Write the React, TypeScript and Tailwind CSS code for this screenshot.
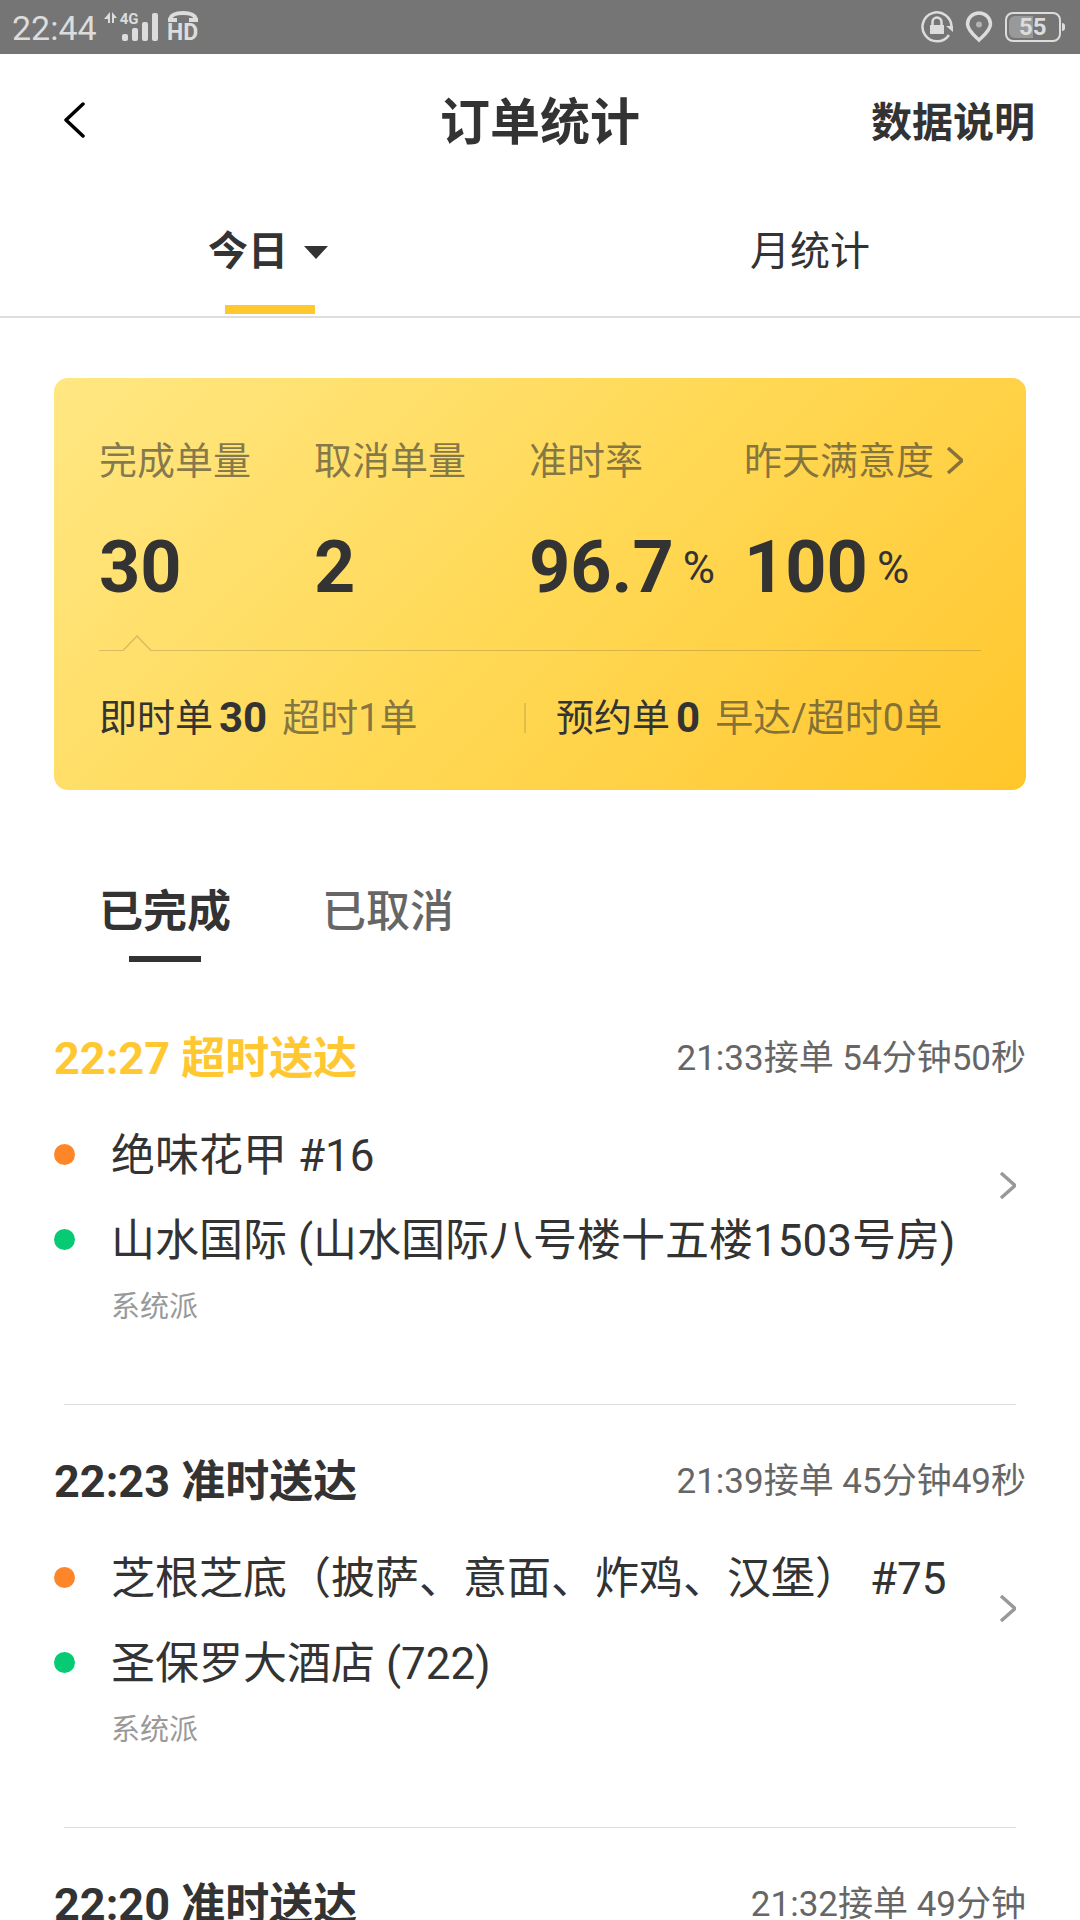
import { useState } from 'react';
import clsx from 'clsx';

type Order = {
  time: string;
  status: string;
  late?: boolean;
  summary: string;
  shop?: string;
  address?: string;
  source?: string;
};

const stats = [
  { label: '完成单量', value: '30' },
  { label: '取消单量', value: '2' },
  { label: '准时率', value: '96.7', unit: '%' },
  { label: '昨天满意度', value: '100', unit: '%', link: true },
];

const orders: Order[] = [
  {
    time: '22:27',
    status: '超时送达',
    late: true,
    summary: '21:33接单 54分钟50秒',
    shop: '绝味花甲 #16',
    address: '山水国际 (山水国际八号楼十五楼1503号房)',
    source: '系统派',
  },
  {
    time: '22:23',
    status: '准时送达',
    summary: '21:39接单 45分钟49秒',
    shop: '芝根芝底（披萨、意面、炸鸡、汉堡） #75',
    address: '圣保罗大酒店 (722)',
    source: '系统派',
  },
  { time: '22:20', status: '准时送达', summary: '21:32接单 49分钟' },
];

function Chevron({ className }: { className?: string }) {
  return (
    <svg viewBox="0 0 18 28" className={clsx('h-7 w-[18px] shrink-0', className)} fill="none" stroke="currentColor" strokeWidth="3.5" aria-hidden="true">
      <path d="M3 1 17 13.500 3 26" />
    </svg>
  );
}

function StatusBar() {
  return (
    <div className="flex h-[54px] shrink-0 items-center justify-between bg-[#757575] pr-[15px] pl-3 text-[#dcdcdc]">
      <div className="flex items-center">
        <span className="pt-0.5 text-[34px] leading-[54px]">22:44</span>
        <div className="relative ml-[7px] h-8 w-[55px]">
          <svg viewBox="0 0 55 32" className="h-8 w-[55px]" fill="currentColor" aria-hidden="true">
            <path d="M6 1v11H4V8H0zM8 1l5 6H10v5H8z" />
            <rect x="18" y="23" width="6" height="7" rx="2" />
            <rect x="28" y="17" width="6" height="13" rx="2" />
            <rect x="38" y="11" width="6" height="19" rx="2" />
            <rect x="48" y="2" width="6" height="28" rx="2" />
          </svg>
          <span className="absolute top-0 left-4 text-[15px] leading-4 font-bold">4G</span>
        </div>
        <div className="ml-2 flex w-8 flex-col items-center">
          <svg viewBox="0 0 30 12" className="h-3 w-[30px]" fill="none" stroke="currentColor" strokeWidth="4" aria-hidden="true">
            <path d="M2 8C3 4 8 2 15 2s12 2 13 6" />
            <path d="M0 9h9M21 9h9" />
          </svg>
          <span className="text-[23px] leading-5 font-bold">HD</span>
        </div>
      </div>
      <div className="flex items-center">
        <svg viewBox="0 0 32 32" className="h-8 w-8" fill="none" stroke="currentColor" strokeWidth="2.5" aria-hidden="true">
          <path d="M28 24A14.500 14.500 0 1 1 30.500 16" />
          <path d="M25 15h7v6z" fill="currentColor" stroke="none" />
          <rect x="9" y="14" width="14" height="9" fill="currentColor" stroke="none" />
          <path d="M11.500 14v-3a4.500 4.500 0 0 1 9 0v3" />
        </svg>
        <svg viewBox="0 0 28 32" className="ml-3 h-8 w-7" fill="none" stroke="currentColor" strokeWidth="3.500" aria-hidden="true">
          <path d="M14 29C10 25 2.500 19.500 2.500 13a11.500 11 0 0 1 23 0C25.500 19.500 18 25 14 29z" />
          <circle cx="14" cy="13.500" r="3" fill="currentColor" stroke="none" opacity=".6" />
        </svg>
        <div className="ml-3 flex h-[30px] w-14 items-center rounded-lg border-2 border-current p-0.5">
          <div className="flex h-full w-1/2 items-center rounded-l-md bg-[#999]">
            <span className="pl-2.5 text-2xl leading-6 font-bold">55</span>
          </div>
        </div>
        <div className="ml-px h-2 w-[3px] rounded-r-sm bg-current" />
      </div>
    </div>
  );
}

function SummaryCard() {
  return (
    <section className="mx-[54px] mt-[60px] rounded-[14px] bg-linear-135 from-[#ffe782] via-[#ffd955] to-[#ffc629] px-[45px] pt-[53px] pb-[42px]">
      <div className="mr-[22px] grid grid-cols-4">
        {stats.map((stat) => (
          <div key={stat.label} className="whitespace-nowrap">
            <div className="flex h-[60px] items-center text-[38px] text-[#333]/60">
              {stat.link ? (
                <a href="#satisfaction" className="flex items-center gap-[11px]">
                  {stat.label}
                  <Chevron />
                </a>
              ) : (
                stat.label
              )}
            </div>
            <div className="mt-[37px] flex h-20 items-center gap-[9px]">
              <span className="text-[72px] leading-20 font-bold">{stat.value}</span>
              {stat.unit && <span className="text-[44px] leading-20">{stat.unit}</span>}
            </div>
          </div>
        ))}
      </div>
      {/* rule with a notch pointing at the first column */}
      <div className="mt-[27px] flex h-4 items-end text-[#333]/20">
        <div className="h-px w-6 bg-current" />
        <svg viewBox="0 0 28 16" className="h-4 w-7" fill="none" stroke="currentColor" strokeWidth="1.500" aria-hidden="true">
          <path d="M0 15.500 14 1 28 15.500" />
        </svg>
        <div className="h-px flex-1 bg-current" />
      </div>
      <div className="mt-[37px] flex h-[60px] items-center text-[38px] leading-[60px] whitespace-nowrap">
        <p className="flex w-[425px] items-center">
          即时单
          <b className="ml-1.5 text-[42px]">30</b>
          <span className="ml-[15px] text-[#333]/60">超时1单</span>
        </p>
        <div className="h-[30px] w-0.5 bg-[#333]/15" />
        <p className="ml-[30px] flex items-center">
          预约单
          <b className="ml-1.5 text-[42px]">0</b>
          <span className="ml-[15px] text-[#333]/60">早达/超时0单</span>
        </p>
      </div>
    </section>
  );
}

function OrderItem({ order }: { order: Order }) {
  return (
    <li>
      <div className="mx-[54px] flex h-[60px] items-center justify-between">
        <h2 className={clsx('text-[45px] font-bold', order.late && 'text-[#ffc832]')}>
          {order.time} <span className="text-[44px]">{order.status}</span>
        </h2>
        <span className="text-[35px] text-[#666]">{order.summary}</span>
      </div>
      {order.shop && (
        <a href="#order" className="mx-16 mt-[37px] flex border-b border-[#ddd] pb-[77px]">
          <div className="-ml-2.5 flex-1">
            <div className="flex items-center gap-9">
              <i className="mb-1 size-[21px] rounded-full bg-[#ff8628]" />
              <span className="text-[44px] leading-[60px]">{order.shop}</span>
            </div>
            <div className="mt-[25px] flex items-center gap-9">
              <i className="mb-1 size-[21px] rounded-full bg-[#06cb74]" />
              <span className="text-[44px] leading-[60px]">{order.address}</span>
            </div>
            <p className="mt-4 pl-[57px] text-[29px] leading-10 text-[#999]">{order.source}</p>
          </div>
          <Chevron className="mt-[46px] text-[#999]" />
        </a>
      )}
    </li>
  );
}

export default function App() {
  const [period, setPeriod] = useState('day');
  const [list, setList] = useState('done');

  return (
    <div className="flex h-screen flex-col overflow-hidden bg-white font-['Roboto','Noto_Sans_CJK_SC',sans-serif] text-[#333]">
      <StatusBar />

      <header className="grid h-[138px] shrink-0 grid-cols-[1fr_auto_1fr] items-center px-[45px]">
        <button aria-label="返回" className="justify-self-start pb-1.5 pl-4 text-black">
          <svg viewBox="0 0 24 38" className="h-[38px] w-6" fill="none" stroke="currentColor" strokeWidth="3.500" strokeLinecap="round" strokeLinejoin="round">
            <path d="M22 3 5 19 22 35" />
          </svg>
        </button>
        <h1 className="text-[50px] font-bold">订单统计</h1>
        <button className="justify-self-end pt-0.5 text-[41px] font-bold">数据说明</button>
      </header>

      <nav className="grid h-[126px] shrink-0 grid-cols-2 border-b-2 border-[#ddd] text-[40px]">
        <button
          onClick={() => setPeriod('day')}
          className={clsx('relative flex items-center justify-center pr-1 pb-1', period === 'day' && 'font-bold')}
        >
          今日
          <svg viewBox="0 0 24 13" className="ml-4 h-[13px] w-6" fill="currentColor" aria-hidden="true">
            <path d="M0 0h24L12 13z" />
          </svg>
          {period === 'day' && <span className="absolute bottom-0.5 left-1/2 h-[9px] w-[90px] -translate-x-1/2 bg-[#ffc82e]" />}
        </button>
        <button
          onClick={() => setPeriod('month')}
          className={clsx('relative flex items-center justify-center pb-1', period === 'month' && 'font-bold')}
        >
          月统计
          {period === 'month' && <span className="absolute bottom-0.5 left-1/2 h-[9px] w-[90px] -translate-x-1/2 bg-[#ffc82e]" />}
        </button>
      </nav>

      <main className="min-h-0 flex-1 overflow-hidden">
        <SummaryCard />

        <div className="mt-[92px] flex gap-[91px] pl-[99px] text-[44px] leading-[60px] font-medium">
          {[
            { id: 'done', label: '已完成' },
            { id: 'cancelled', label: '已取消' },
          ].map((tab) => (
            <button
              key={tab.id}
              onClick={() => setList(tab.id)}
              className={clsx('flex h-20 flex-col items-center justify-between', list === tab.id ? 'font-bold' : 'text-[#666]')}
            >
              {tab.label}
              {list === tab.id && <span className="h-1.5 w-[72px] bg-[#333]" />}
            </button>
          ))}
        </div>

        <ul className="mt-[67px] flex flex-col gap-[47px]">
          {orders.map((order) => (
            <OrderItem key={order.time} order={order} />
          ))}
        </ul>
      </main>
    </div>
  );
}
